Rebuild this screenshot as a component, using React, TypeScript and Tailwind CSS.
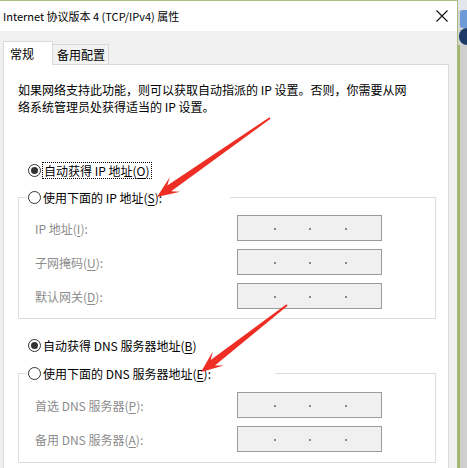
import React from "react";

function arrowPoints(tx: number, ty: number, hx: number, hy: number) {
  const dx = hx - tx;
  const dy = hy - ty;
  const L = Math.hypot(dx, dy);
  const ux = dx / L;
  const uy = dy / L;
  const nx = -uy;
  const ny = ux;
  const at = (d: number, w: number) =>
    `${(tx + ux * d + nx * w).toFixed(1)},${(ty + uy * d + ny * w).toFixed(1)}`;
  return [
    at(0, 0.9),
    at(L - 15, 3.4),
    at(L - 22, 9),
    at(L, 0),
    at(L - 22, -9),
    at(L - 15, -3.4),
    at(0, -0.9),
  ].join(" ");
}

function Radio({ checked }: { checked?: boolean }) {
  return (
    <span className="flex h-[13px] w-[13px] shrink-0 items-center justify-center rounded-full border border-[#333333] bg-white">
      {checked ? <span className="h-[7px] w-[7px] rounded-full bg-[#333333]" /> : null}
    </span>
  );
}

function IpBox() {
  return (
    <div className="flex h-[26px] w-[145px] items-center border border-[#9b9b9b] bg-[#f0f0f0] pt-[2px]">
      <span className="ml-[36px] h-[2px] w-[2px] bg-[#8a8a8a]" />
      <span className="ml-[33px] h-[2px] w-[2px] bg-[#8a8a8a]" />
      <span className="ml-[34px] h-[2px] w-[2px] bg-[#8a8a8a]" />
    </div>
  );
}

function Row({ label, u, suffix }: { label: string; u: string; suffix: string }) {
  return (
    <div className="flex items-center pl-[16px]">
      <span className="w-[202px] whitespace-nowrap text-[12px] leading-[17px] text-[#8c8c8c]">
        {label}
        <u className="underline-offset-2">{u}</u>
        {suffix}
      </span>
      <IpBox />
    </div>
  );
}

export default function App() {
  return (
    <div className="relative flex h-[468px] w-[467px] overflow-hidden bg-[#d4d4d4] font-['Noto_Sans_CJK_SC','Microsoft_YaHei',sans-serif] text-black">
      <div className="flex h-full w-[458px] shrink-0 flex-col border-r border-t border-[#a9bd7c]">
        <div className="flex h-[30px] shrink-0 items-center justify-between bg-white pl-[3px] pr-[9px]">
          <span className="whitespace-nowrap text-[11px] leading-[17px]">Internet 协议版本 4 (TCP/IPv4) 属性</span>
          <svg width="12" height="12" viewBox="0 0 12 12" className="shrink-0">
            <path d="M0.5 0.5 L11.5 11.5 M11.5 0.5 L0.5 11.5" stroke="#111" strokeWidth="1.1" fill="none" />
          </svg>
        </div>
        <div className="flex flex-1 flex-col bg-[#f0f0f0] pl-[3px] pt-[10px]">
          <div className="flex h-[23px] shrink-0 items-end">
            <div className="relative z-10 -mb-px flex h-[24px] w-[50px] items-center border border-b-0 border-[#d9d9d9] bg-white pl-[6px] text-[12px] leading-[17px]">
              常规
            </div>
            <div className="flex h-[20px] w-[56px] items-center border border-b-0 border-l-0 border-[#d9d9d9] bg-[#f2f2f2] pl-[4px] text-[12px] leading-[17px]">
              备用配置
            </div>
          </div>
          <div className="h-[420px] w-[446px] shrink-0 border border-[#d9d9d9] bg-white pl-[14px] pt-[16px]">
            <p className="whitespace-nowrap text-[12px] leading-[17px]">
              如果网络支持此功能，则可以获取自动指派的 IP 设置。否则，你需要从网
              <br />
              络系统管理员处获得适当的 IP 设置。
            </p>

            <div className="ml-[10px] mt-[46px] flex h-[18px] items-center gap-[1px]">
              <Radio checked />
              <span className="whitespace-nowrap border border-dotted border-black px-[1px] text-[12px] leading-[15px]">
                自动获得 IP 地址(<u className="underline-offset-2">O</u>)
              </span>
            </div>

            <fieldset className="mt-[9px] w-[418px] border border-[#dcdcdc] pb-[9px]">
              <legend className="ml-[8px] flex h-[18px] w-[203px] items-center gap-[2px] bg-white pl-[1px]">
                <Radio />
                <span className="whitespace-nowrap text-[12px] leading-[17px]">
                  使用下面的 IP 地址(<u className="underline-offset-2">S</u>):
                </span>
              </legend>
              <div className="flex flex-col gap-[8px] pt-[9px]">
                <Row label="IP 地址(" u="I" suffix="):" />
                <Row label="子网掩码(" u="U" suffix="):" />
                <Row label="默认网关(" u="D" suffix="):" />
              </div>
            </fieldset>

            <div className="ml-[10px] mt-[17px] flex h-[18px] items-center gap-[2px]">
              <Radio checked />
              <span className="whitespace-nowrap text-[12px] leading-[17px]">
                自动获得 DNS 服务器地址(<u className="underline-offset-2">B</u>)
              </span>
            </div>

            <fieldset className="mt-[10px] w-[418px] border border-[#dcdcdc] pb-[10px]">
              <legend className="ml-[8px] flex h-[18px] w-[248px] items-center gap-[2px] bg-white pl-[1px]">
                <Radio />
                <span className="whitespace-nowrap text-[12px] leading-[17px]">
                  使用下面的 DNS 服务器地址(<u className="underline-offset-2">E</u>):
                </span>
              </legend>
              <div className="flex flex-col gap-[8px] pt-[10px]">
                <Row label="首选 DNS 服务器(" u="P" suffix="):" />
                <Row label="备用 DNS 服务器(" u="A" suffix="):" />
              </div>
            </fieldset>
          </div>
        </div>
      </div>

      <div className="flex h-full w-[9px] flex-col">
        <div className="h-[10px] bg-[#e3e6ea]" />
        <div className="ml-[2px] h-[18px] rounded-l-[3px] bg-[#6f9ad8]" />
        <div className="ml-[1px] h-[17px] rounded-l-full bg-[#1d3a66]" />
        <div className="flex flex-1">
          <div className="w-[2px] bg-[#9fb86a]" />
          <div className="flex-1 bg-[#cfcfcf]" />
        </div>
      </div>

      <svg className="pointer-events-none absolute left-0 top-0" width="467" height="468">
        <polygon points={arrowPoints(270, 118, 157, 197)} fill="#ee2d24" />
        <polygon points={arrowPoints(287, 305, 201, 372)} fill="#ee2d24" />
      </svg>
    </div>
  );
}
